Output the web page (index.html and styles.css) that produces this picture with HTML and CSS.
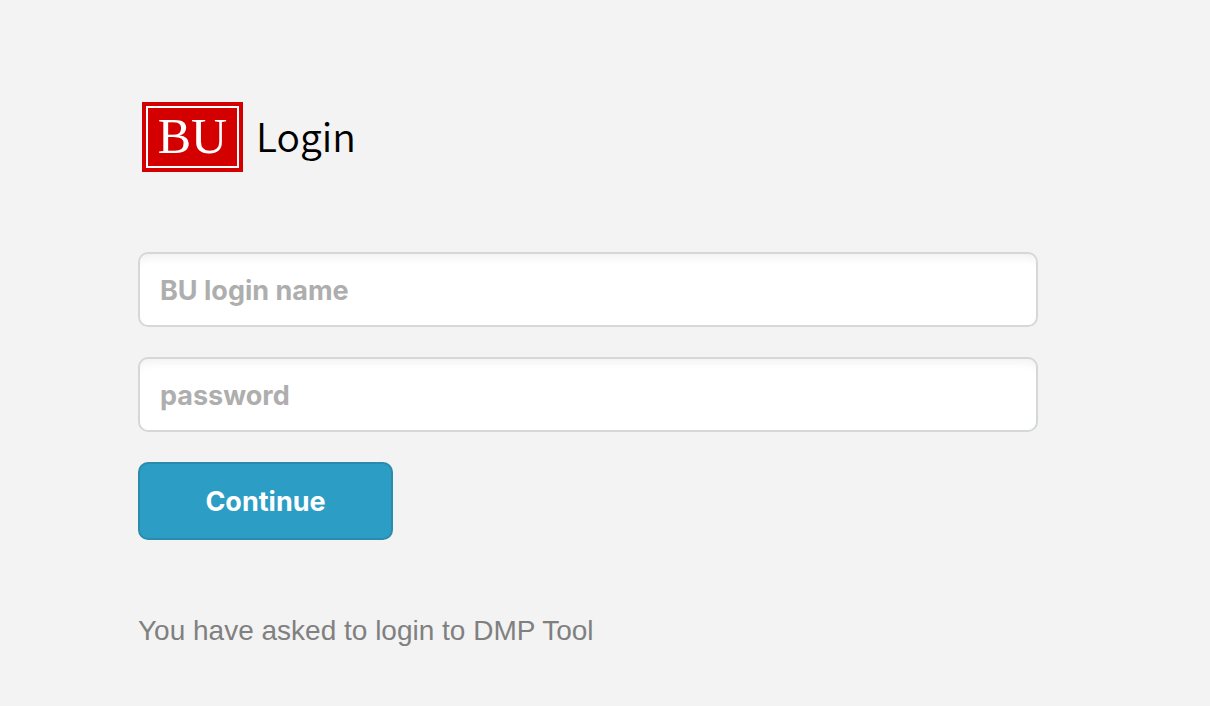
FILE: index.html
```html
<!DOCTYPE html>
<html lang="en">
<head>
<meta charset="utf-8">
<title>BU Login</title>
<link rel="stylesheet" href="styles.css">
</head>
<body>
<main class="page">
  <h1 class="brand"><span class="logo"><span class="logo-inner">BU</span></span><span class="brand-name">Login</span></h1>
  <form class="login-form">
    <input class="field" type="text" placeholder="BU login name" aria-label="BU login name">
    <input class="field" type="password" placeholder="password" aria-label="password">
    <button class="submit" type="submit">Continue</button>
  </form>
  <p class="note">You have asked to login to DMP Tool</p>
</main>
</body>
</html>
```
FILE: styles.css
```css
* { box-sizing: border-box; }
body {
  margin: 0;
  background: #f3f3f3;
  font-family: "Liberation Sans", Arial, sans-serif;
}
.page {
  max-width: 1210px;
  padding: 102px 172px 56px 138px;
}
.brand {
  display: flex;
  align-items: center;
  gap: 13px;
  margin: 0 0 80px;
  padding-left: 4px;
  font-weight: 400;
}
.logo {
  padding: 4px;
  background: #d40000;
}
.logo-inner {
  display: block;
  width: 93px;
  padding-bottom: 2px;
  border: 2px solid #fff;
  color: #fff;
  font: 50px/56px "Liberation Serif", "Times New Roman", serif;
  text-align: center;
}
.brand-name {
  padding-bottom: 4px;
  color: #000;
  font: 350 39px/60px "Noto Sans CJK SC", "Open Sans", sans-serif;
}
.login-form {
  display: flex;
  flex-direction: column;
  align-items: flex-start;
  gap: 30px;
}
.field {
  width: 100%;
  height: 75px;
  padding: 2px 20px 0;
  border: 2px solid #d5d8d8;
  border-radius: 10px;
  background: #fff;
  box-shadow: inset 0 10px 8px -6px #f2f2f2;
  color: #555;
  font: 700 27px/36px Inter, sans-serif;
}
.field::placeholder { color: #aeaeae; opacity: 1; }
.submit {
  min-width: 255px;
  height: 78px;
  padding: 2px 20px 0;
  border: 2px solid #2b8bac;
  border-radius: 10px;
  background: #2c9dc4;
  color: #fff;
  font: 700 27px/36px Inter, sans-serif;
}
.note {
  margin: 73px 0 0;
  color: #808080;
  font-size: 28px;
  line-height: 36px;
}
```
